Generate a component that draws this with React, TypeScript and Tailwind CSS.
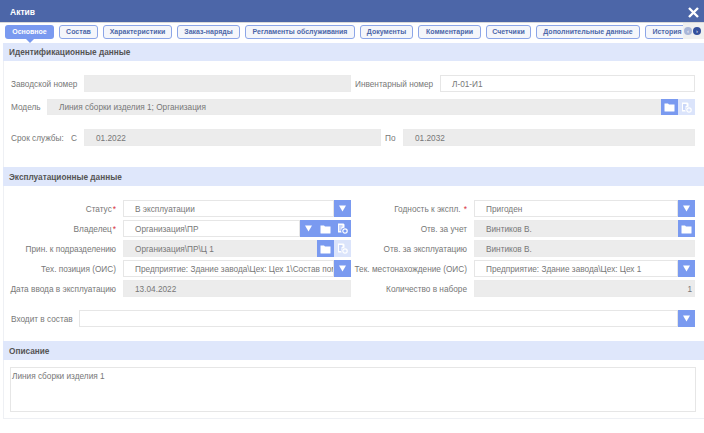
const FONT = "font-['Liberation_Sans',Arial,sans-serif]";

const TABS = [
  { text: "Состав", w: "w-[39px]" },
  { text: "Характеристики", w: "w-[69px]" },
  { text: "Заказ-наряды", w: "w-[63px]" },
  { text: "Регламенты обслуживания", w: "w-[110px]" },
  { text: "Документы", w: "w-[53px]" },
  { text: "Комментарии", w: "w-[63px]" },
  { text: "Счетчики", w: "w-[45px]" },
  { text: "Дополнительные данные", w: "w-[104px]" },
  { text: "История", w: "w-[44px]" },
];

function FolderIcon() {
  return (
    <svg width="11" height="10" viewBox="0 0 11 10" fill="#fff" aria-hidden="true">
      <path d="M0.5 1.5h3.5l1 1h5.5v6.5a.5.5 0 0 1-.5.5h-9a.5.5 0 0 1-.5-.5z" />
    </svg>
  );
}

function CardIcon() {
  return (
    <svg width="11" height="11" viewBox="0 0 11 11" aria-hidden="true">
      <path d="M1 0.5h5.5l1 1v3.2a3 3 0 0 0-2.8 4.8H1z" fill="#fff" />
      <path d="M2 3h3.5M2 5h2.5M2 7h2" stroke="#7a9af0" strokeWidth="0.8" />
      <circle cx="8" cy="8" r="2.2" fill="none" stroke="#fff" strokeWidth="1.2" />
    </svg>
  );
}

function IconButton({ children, faded }: { children: React.ReactNode; faded?: boolean }) {
  return (
    <span className={`flex w-[17px] shrink-0 items-center justify-center self-stretch ${faded ? "bg-[#dbe4fb]" : "bg-[#7a9af0]"}`}>
      {children}
    </span>
  );
}

function Arrow() {
  return (
    <IconButton>
      <svg width="9" height="7" viewBox="0 0 9 7" fill="#fff" aria-hidden="true">
        <path d="M1 0.5h7l-3.5 6z" />
      </svg>
    </IconButton>
  );
}

function Field({
  value,
  disabled,
  right,
  cls = "h-[17px]",
  children,
}: {
  value?: string;
  disabled?: boolean;
  right?: boolean;
  cls?: string;
  children?: React.ReactNode;
}) {
  return (
    <div className={`flex min-w-0 shrink-0 items-stretch ${cls}`}>
      <div
        className={`flex min-w-0 flex-1 items-center overflow-hidden whitespace-nowrap border pt-[3px] text-[8.25px] text-[#777] ${
          disabled ? "border-[#ebebeb] bg-[#ececec]" : "border-[#e6e6e6] bg-white"
        } ${right ? "justify-end pr-[2px]" : "pl-[11px]"}`}
      >
        {value}
      </div>
      {children}
    </div>
  );
}

function Section({ title, h = "h-[19px]" }: { title: string; h?: string }) {
  return (
    <div className={`-ml-[1px] flex items-center bg-[#dfe7fb] pl-[6px] pt-[3px] text-[8.25px] font-bold text-[#555] ${h}`}>
      {title}
    </div>
  );
}

function Label({ text, req, cls = "" }: { text: string; req?: boolean; cls?: string }) {
  return (
    <div className={`shrink-0 whitespace-nowrap pt-[3px] text-[8.25px] text-[#777] ${cls}`}>
      {text}
      {req && <span className="ml-[1px] text-[#d9363e]">*</span>}
    </div>
  );
}

function OpsRow({
  l,
  r,
  lReq,
  rReq,
  left,
  right,
}: {
  l: string;
  r: string;
  lReq?: boolean;
  rReq?: boolean;
  left: React.ReactNode;
  right: React.ReactNode;
}) {
  return (
    <div className="flex h-[17px] items-center">
      <Label text={l} req={lReq} cls="w-[112px] text-right" />
      <div className="ml-[7px] w-[228px] shrink-0">{left}</div>
      <Label text={r} req={rReq} cls="w-[116px] text-right" />
      <div className="ml-[7px] w-[221px] shrink-0">{right}</div>
    </div>
  );
}

export default function App() {
  return (
    <div className={`relative h-[433px] w-[704px] overflow-hidden bg-white ${FONT}`}>
      {/* Шапка */}
      <div className="flex h-[22px] items-center justify-between bg-[#4c66a8] pl-[10px] pr-[4px]">
        <span className="pt-[2px] text-[8.5px] font-bold text-white">Актив</span>
        <svg width="11" height="11" viewBox="0 0 11 11" stroke="#fff" strokeWidth="2.4" className="mt-[3px] mr-[1px]" aria-hidden="true">
          <path d="M1 1l9 9M10 1l-9 9" />
        </svg>
      </div>

      {/* Вкладки */}
      <div className="flex h-[21px] gap-[5px] overflow-hidden border-t border-[#d9d9d9] pl-[5px] pt-[2px]">
        <div className="relative flex h-[14px] w-[49px] shrink-0 items-center justify-center rounded-[3px] bg-[#7a9af0] text-[7px] font-bold text-white">
          Основное
          <span className="absolute left-[21px] top-[14px] h-0 w-0 border-x-[4px] border-t-[4px] border-x-transparent border-t-[#7a9af0]" />
        </div>
        {TABS.map((tab) => (
          <div
            key={tab.text}
            className={`flex h-[14px] shrink-0 items-center justify-center whitespace-nowrap rounded-[3px] border border-[#8ca6e8] bg-[#f4f6fb] text-[7px] font-bold text-[#4c66a8] ${tab.w}`}
          >
            {tab.text}
          </div>
        ))}
      </div>
      <div className="absolute right-0 top-[23px] flex h-[16px] w-[21px] items-center gap-[1px] bg-[#f0f0f0] pl-[1px]">
        <span className="flex h-[8px] w-[8px] items-center justify-center rounded-full bg-[#a9b6d8] text-[6px] leading-none text-white">‹</span>
        <span className="flex h-[8px] w-[8px] items-center justify-center rounded-full bg-[#34509c] text-[6px] leading-none text-white">›</span>
      </div>

      {/* Панель */}
      <div className="ml-[3px] h-[376px] border-b border-l border-[#eef0f4]">
        <Section title="Идентификационные данные" h="h-[18px]" />

        <div className="pl-[7px] pt-[14px]">
          <div className="flex h-[17px] items-center">
            <Label text="Заводской номер" cls="w-[73px]" />
            <Field disabled cls="h-[17px] w-[267px]" />
            <Label text="Инвентарный номер" cls="ml-[4px] w-[85px]" />
            <Field value="Л-01-И1" cls="h-[17px] w-[255px]" />
          </div>
          <div className="mt-[7px] flex h-[16px] items-center">
            <Label text="Модель" cls="w-[36px]" />
            <Field value="Линия сборки изделия 1; Организация" disabled cls="h-[16px] w-[648px]">
              <IconButton><FolderIcon /></IconButton>
              <IconButton faded><CardIcon /></IconButton>
            </Field>
          </div>
          <div className="mt-[14px] flex h-[17px] items-center">
            <Label text="Срок службы:" cls="w-[60px]" />
            <Label text="С" cls="w-[13px]" />
            <Field value="01.2022" disabled cls="h-[17px] w-[297px]" />
            <Label text="По" cls="ml-[4px] w-[18px]" />
            <Field value="01.2032" disabled cls="h-[17px] w-[292px]" />
          </div>
        </div>

        <div className="mt-[21px]">
          <Section title="Эксплуатационные данные" />
        </div>

        <div className="flex flex-col gap-[3px] pt-[14px]">
          <OpsRow
            l="Статус"
            lReq
            r="Годность к экспл. "
            rReq
            left={<Field value="В эксплуатации"><Arrow /></Field>}
            right={<Field value="Пригоден"><Arrow /></Field>}
          />
          <OpsRow
            l="Владелец"
            lReq
            r="Отв. за учет"
            left={
              <Field value="Организация\ПР">
                <Arrow />
                <IconButton><FolderIcon /></IconButton>
                <IconButton><CardIcon /></IconButton>
              </Field>
            }
            right={<Field value="Винтиков В." disabled><IconButton><FolderIcon /></IconButton></Field>}
          />
          <OpsRow
            l="Прин. к подразделению"
            r="Отв. за эксплуатацию"
            left={
              <Field value="Организация\ПР\Ц 1" disabled>
                <IconButton><FolderIcon /></IconButton>
                <IconButton faded><CardIcon /></IconButton>
              </Field>
            }
            right={<Field value="Винтиков В." disabled />}
          />
          <OpsRow
            l="Тех. позиция (ОИС)"
            r="Тек. местонахождение (ОИС)"
            left={<Field value="Предприятие: Здание завода\Цех: Цех 1\Состав помещений"><Arrow /></Field>}
            right={<Field value="Предприятие: Здание завода\Цех: Цех 1"><Arrow /></Field>}
          />
          <OpsRow
            l="Дата ввода в эксплуатацию"
            r="Количество в наборе"
            left={<Field value="13.04.2022" disabled />}
            right={<Field value="1" disabled right />}
          />
        </div>

        <div className="mt-[13px] flex h-[17px] items-center pl-[7px]">
          <Label text="Входит в состав" cls="w-[68px]" />
          <Field cls="h-[17px] w-[616px]"><Arrow /></Field>
        </div>

        <div className="mt-[14px]">
          <Section title="Описание" />
        </div>

        <div className="ml-[6px] mt-[7px] h-[45px] w-[686px] border border-[#e6e6e6] px-[1px] pt-[3px] text-[8.25px] text-[#777]">
          Линия сборки изделия 1
        </div>
      </div>
    </div>
  );
}
